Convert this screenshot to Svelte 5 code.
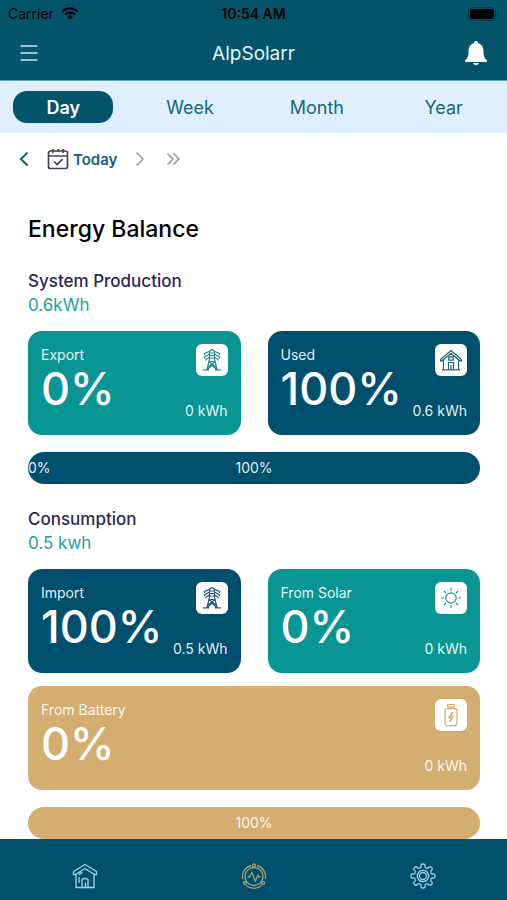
<script lang="ts">
	type Tone = 'teal' | 'navy' | 'gold';
	type IconName = 'pylon' | 'house' | 'sun' | 'battery';
	type Card = { label: string; percent: number; energy: string; tone: Tone; icon: IconName };
	type Segment = { percent: number; tone: Tone };
	type Section = { title: string; total: string; cards: Card[]; bar: Segment[] };

	const periods = ['Day', 'Week', 'Month', 'Year'];
	let activePeriod = $state('Day');
	let activePage = $state('energy');

	const sections: Section[] = [
		{
			title: 'System Production',
			total: '0.6kWh',
			cards: [
				{ label: 'Export', percent: 0, energy: '0 kWh', tone: 'teal', icon: 'pylon' },
				{ label: 'Used', percent: 100, energy: '0.6 kWh', tone: 'navy', icon: 'house' }
			],
			bar: [
				{ percent: 0, tone: 'teal' },
				{ percent: 100, tone: 'navy' }
			]
		},
		{
			title: 'Consumption',
			total: '0.5 kwh',
			cards: [
				{ label: 'Import', percent: 100, energy: '0.5 kWh', tone: 'navy', icon: 'pylon' },
				{ label: 'From Solar', percent: 0, energy: '0 kWh', tone: 'teal', icon: 'sun' },
				{ label: 'From Battery', percent: 0, energy: '0 kWh', tone: 'gold', icon: 'battery' }
			],
			bar: [{ percent: 100, tone: 'gold' }]
		}
	];
</script>

{#snippet cardIcon(name: IconName)}
	<svg viewBox="0 0 24 24" width="24" height="24" aria-hidden="true">
		{#if name === 'pylon'}
			<path d="M9.500 11V3.200L12 1.500l2.500 1.700V11M9.500 5h5M9.500 7.500h5M9.500 10h5" />
			<path d="M9.500 3.200 4.500 5.500v1.500M14.500 3.200l5 2.300v1.500M9.500 6.200 4.500 8.700v1.500M14.500 6.200l5 2.500v1.500M9.500 9.300 6 11.200v1.300M14.500 9.300l3.500 1.900v1.300" />
			<path d="M9.500 11 7 21.500M14.500 11 17 21.500M9 13.500h6M9 13.500l7 5.500M15 13.500 8 19M7.500 21.500 12 17l4.500 4.500M3 21.800h6M15 21.800h6" />
		{:else if name === 'house'}
			<path d="M1.500 11.500 12 2.500l10.500 9M1.500 11.500v1.300h1.700L12 5.300l8.800 7.500h1.700v-1.300" />
			<path d="M4.500 12.500v9.200M19.500 12.500v9.200M9.500 21.500v-7h5v7M12 17v4.500M9.800 8.800h4.400v3.400H9.800z" />
			<path d="M3 21.800h18" />
		{:else if name === 'sun'}
			<circle cx="12" cy="12" r="5.200" />
			<path d="M12 2v2.800M12 19.200V22M2 12h2.800M19.200 12H22M5 5l2 2M17 17l2 2M5 19l2-2M17 7l2-2" />
		{:else}
			<rect x="8.500" y="1.500" width="7" height="2.600" rx="1" />
			<path d="M9.500 4.200v1.500M14.500 4.200v1.500" />
			<rect x="6" y="5.700" width="12" height="17" rx="2.500" />
			<path d="m13.500 9-4 5.500h2.200L10.800 19l3.800-5.800h-2.300z" />
		{/if}
	</svg>
{/snippet}

<div class="app">
	<header>
		<div class="status">
			<span class="carrier">
				Carrier
				<svg viewBox="0 0 18 13" width="18" height="13" aria-hidden="true">
					<path d="M1.200 4.700a11 11 0 0 1 15.600 0M4 7.700a7 7 0 0 1 10 0" fill="none" stroke="currentColor" stroke-width="2.200" />
					<path d="M6.200 9.700a4 4 0 0 1 5.600 0L9 12.700z" fill="currentColor" />
				</svg>
			</span>
			<span class="clock">10:54 AM</span>
			<svg class="charge" viewBox="0 0 31 14" width="31" height="14" aria-hidden="true">
				<rect x="0.500" y="0.500" width="27" height="13" rx="4" fill="none" stroke="#00000059" />
				<rect x="2" y="2" width="24" height="10" rx="2.500" />
				<path d="M29 5v4q1.600-.5 1.600-2T29 5z" fill="#00000066" />
			</svg>
		</div>
		<div class="title-bar">
			<button aria-label="Menu">
				<svg viewBox="0 0 18 16" width="18" height="16" aria-hidden="true">
					<path d="M.5 1h17M.5 8h17M.5 15h17" fill="none" stroke="#cfe3ee" stroke-width="1.500" />
				</svg>
			</button>
			<h1>AlpSolarr</h1>
			<button class="alerts" aria-label="Notifications">
				<svg viewBox="0 0 22 24" width="22" height="24" aria-hidden="true">
					<path d="M11 0c1.300 0 2 .9 2.100 2 3.400.9 5.300 3.700 5.300 7.300 0 4.700.6 7.500 2.800 9.200.6.500.8 1 .8 1.500 0 .7-.5 1-1.300 1H1.300C.5 21 0 20.700 0 20c0-.5.2-1 .8-1.500 2.200-1.700 2.800-4.500 2.800-9.200C3.600 5.700 5.500 2.900 8.900 2 9 .9 9.700 0 11 0zM8 22h6c-.4 1.300-1.500 2-3 2s-2.600-.7-3-2z" fill="#fff" />
				</svg>
			</button>
		</div>
	</header>

	<div class="tabs" role="tablist" aria-label="Period">
		{#each periods as period}
			<button
				role="tab"
				aria-selected={activePeriod === period}
				class:active={activePeriod === period}
				onclick={() => (activePeriod = period)}
			>
				{period}
			</button>
		{/each}
	</div>

	<main>
		<div class="dates">
			<button aria-label="Previous day">
				<svg viewBox="0 0 10 16" width="10" height="16"><path d="M8.500 1.500 2 8l6.500 6.500" /></svg>
			</button>
			<button class="today">
				<svg viewBox="0 0 22 22" width="22" height="22" aria-hidden="true">
					<path d="M3.500 3h15a2 2 0 0 1 2 2v13.500a2 2 0 0 1-2 2h-15a2 2 0 0 1-2-2V5a2 2 0 0 1 2-2zM1.500 8h19M6 1v4M16 1v4M11 1v3M7 13.500l3.200 3 5.300-5.300" />
				</svg>
				Today
			</button>
			<button class="later" aria-label="Next day">
				<svg viewBox="0 0 10 16" width="10" height="16"><path d="M1.500 1.500 8 8l-6.500 6.500" /></svg>
			</button>
			<button class="later" aria-label="Latest day">
				<svg viewBox="0 0 15 16" width="15" height="16"><path d="M1.500 2.500 7 8l-5.500 5.500M7.500 2.500 13 8l-5.500 5.500" /></svg>
			</button>
		</div>

		<h2>Energy Balance</h2>

		{#each sections as section}
			<section>
				<h3>{section.title}</h3>
				<p class="total">{section.total}</p>
				<div class="cards">
					{#each section.cards as card}
						<article class="card {card.tone}">
							<div>
								<p class="label">{card.label}</p>
								<p class="percent">{card.percent}%</p>
							</div>
							<div class="side">
								<span class="badge">{@render cardIcon(card.icon)}</span>
								<p class="energy">{card.energy}</p>
							</div>
						</article>
					{/each}
				</div>
				<div class="bar">
					{#each section.bar as segment}
						<div
							class="segment {segment.tone}"
							class:empty={segment.percent === 0}
							style="width: {segment.percent}%"
						>
							<span>{segment.percent}%</span>
						</div>
					{/each}
				</div>
			</section>
		{/each}
	</main>

	<nav aria-label="Main">
		<button aria-label="Home" aria-current={activePage === 'home'} onclick={() => (activePage = 'home')}>
			<svg viewBox="0 0 26 26" width="26" height="26" aria-hidden="true">
				<path d="M1.500 8.500 13 1.500l11.500 7v3h-2L13 5.500l-9.500 6h-2zM4 11.500v13h18v-13M10 24.500v-7.200q0-1.800 3-1.800t3 1.800v7.200M13.500 24.500v-5M7 20v-6M7 12q1-2 3.500-2.500" />
			</svg>
		</button>
		<button class="energy-page" aria-label="Energy" aria-current={activePage === 'energy'} onclick={() => (activePage = 'energy')}>
			<svg viewBox="0 0 26 26" width="26" height="26" aria-hidden="true">
				<circle cx="13" cy="13.500" r="9" />
				<path d="M10 2.500A11.500 11.500 0 0 0 1.700 16M16 2.500A11.500 11.500 0 0 1 24.300 16M5.500 22.500a11.500 11.500 0 0 0 15 0" />
				<circle cx="13" cy="2.500" r="1.500" />
				<circle cx="4" cy="20" r="1.500" />
				<circle cx="22" cy="20" r="1.500" />
				<path d="M6.500 14h1.800l2.500-4.500 3.500 8.500 2.700-6 1 2h1.500" />
			</svg>
		</button>
		<button aria-label="Settings" aria-current={activePage === 'settings'} onclick={() => (activePage = 'settings')}>
			<svg viewBox="0 0 26 26" width="26" height="26" aria-hidden="true">
				{#each [0, 45, 90, 135, 180, 225, 270, 315] as angle}
					<path transform="rotate({angle} 13 13)" d="M9.700 5.200q1.600-.5 1.300-2.300-.3-1.900 2-1.900t2 1.900q-.3 1.800 1.300 2.300" />
				{/each}
				<circle cx="13" cy="13" r="5.700" />
				<circle cx="13" cy="13" r="3.500" />
			</svg>
		</button>
	</nav>
</div>

<style>
	:global(body) {
		margin: 0;
		background: #fff;
	}

	.app {
		display: flex;
		flex-direction: column;
		height: 100vh;
		color: #000;
		font-family: Inter, 'Liberation Sans', sans-serif;
	}

	h1,
	h2,
	h3,
	p {
		margin: 0;
		font-weight: 400;
	}

	button {
		padding: 0;
		border: 0;
		background: none;
		color: inherit;
		font: inherit;
		cursor: pointer;
	}

	svg {
		display: block;
	}

	header {
		flex: none;
		background: #04546b;
	}

	.status,
	.title-bar {
		display: grid;
		grid-template-columns: 1fr auto 1fr;
		align-items: center;
	}

	.status {
		height: 27px;
		padding: 0 8px;
		font-size: 14px;
	}

	.carrier {
		display: flex;
		align-items: center;
		gap: 7px;
	}

	.clock {
		font-weight: 600;
	}

	.charge,
	.alerts {
		justify-self: end;
	}

	.title-bar {
		height: 52px;
		padding: 0 20px 1px;
	}

	h1 {
		color: #e6f4f9;
		font-size: 19px;
	}

	.tabs {
		display: grid;
		flex: none;
		grid-template-columns: repeat(4, 1fr);
		align-items: center;
		justify-items: center;
		height: 53px;
		border-top: 1px solid #62a0b5;
		box-sizing: border-box;
		background: #dfeffd;
		color: #17677b;
		font-size: 18px;
	}

	.tabs button {
		width: 79%;
		height: 32px;
		border-radius: 14px;
	}

	.tabs .active {
		background: #04546b;
		color: #fff;
		font-weight: 600;
	}

	main {
		flex: 1;
		min-height: 0;
		padding: 0 27px 0 28px;
		overflow: hidden auto;
		scrollbar-width: none;
	}

	.dates {
		display: flex;
		align-items: center;
		height: 52px;
		margin-left: -9px;
		gap: 18px;
		color: #17607a;
		font-size: 15px;
		font-weight: 600;
	}

	.dates path {
		fill: none;
		stroke: currentColor;
		stroke-width: 2;
	}

	.today {
		display: flex;
		align-items: center;
		gap: 4px;
	}

	.dates .today path {
		stroke: #494258;
		stroke-width: 1.7;
	}

	.later {
		color: #999;
	}

	.dates .later path {
		stroke-width: 1.5;
	}

	.later + .later {
		margin-left: 3px;
	}

	h2 {
		margin: 28px 0 24px;
		font-size: 23px;
		font-weight: 500;
		line-height: 32px;
	}

	section {
		margin-bottom: 23px;
	}

	h3,
	.total {
		font-size: 17px;
		line-height: 24px;
	}

	h3 {
		color: #2c2850;
		font-weight: 500;
	}

	.total {
		color: #1f9f9b;
	}

	.cards {
		display: grid;
		grid-template-columns: 1fr 1fr;
		gap: 13px 27px;
		margin: 14px 0 17px;
	}

	.card {
		display: flex;
		justify-content: space-between;
		min-height: 78px;
		padding: 13px;
		border-radius: 14px;
		color: #fff;
	}

	.card.gold {
		grid-column: 1 / -1;
	}

	.teal {
		background: #089593;
		--tone: #238c90;
	}

	.navy {
		background: #00506d;
		--tone: #1f5d78;
	}

	.gold {
		background: #d4ad70;
		--tone: #d4ad70;
	}

	.label,
	.energy {
		font-size: 14px;
		line-height: 22px;
		opacity: 0.9;
	}

	.percent {
		font-size: 45px;
		font-weight: 500;
		line-height: 46px;
	}

	.side {
		display: flex;
		flex-direction: column;
		align-items: flex-end;
		justify-content: space-between;
		white-space: nowrap;
	}

	.badge {
		display: grid;
		place-items: center;
		width: 32px;
		height: 32px;
		border-radius: 6px;
		background: #fff;
	}

	.badge svg {
		fill: none;
		stroke: var(--tone);
		stroke-width: 1.2;
	}

	.bar {
		display: flex;
		height: 32px;
		border-radius: 16px;
		overflow: hidden;
		color: #fff;
		font-size: 14px;
		line-height: 32px;
	}

	.segment {
		display: flex;
		flex: none;
		justify-content: center;
	}

	/* a zero share still shows its figure, over the next segment */
	.segment.empty {
		z-index: 1;
		justify-content: flex-start;
	}

	.segment span {
		opacity: 0.9;
	}

	nav {
		display: grid;
		flex: none;
		grid-template-columns: repeat(3, 1fr);
		height: 61px;
		background: #00506d;
	}

	nav button {
		display: grid;
		place-items: center;
		padding-top: 12px;
		color: #a9cfe2;
	}

	nav .energy-page {
		color: #a89f70;
	}

	nav svg {
		fill: none;
		stroke: currentColor;
		stroke-width: 1.3;
	}
</style>
